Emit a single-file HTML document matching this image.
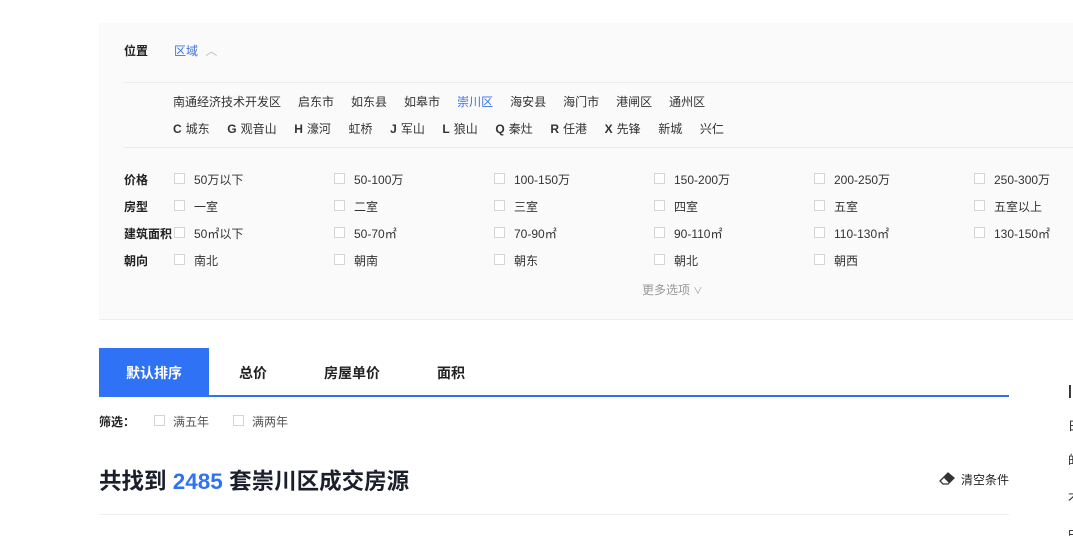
<!DOCTYPE html>
<html><head><meta charset="utf-8"><style>
*{margin:0;padding:0;box-sizing:border-box}
body{width:1073px;height:538px;background:#fff;font-family:"Liberation Sans","Noto Sans CJK SC",sans-serif;position:relative;overflow:hidden;color:#222}
.a{position:absolute;white-space:nowrap;font-size:12px;line-height:14px}
.panel{position:absolute;left:99px;top:23px;width:974px;height:297px;background:#fafafb;border-bottom:1px solid #eee}
.hl{position:absolute;left:124px;height:1px;width:949px;background:#ececee}
.lab{font-weight:bold;color:#222}
.cb{position:absolute;width:11px;height:11px;border:1px solid #d3d5d9;background:#fff}
.o{color:#333}
b.k{font-weight:bold;margin-right:4px}
.d span{margin-left:17px}
.l span.g{margin-left:17.6px}
.tab{position:absolute;top:348px;height:47px;line-height:50px;font-size:14px;font-weight:bold;text-align:center}
</style></head><body>
<div class="panel"></div>
<div class="a lab" style="left:124px;top:44px">位置</div>
<div class="a" style="left:174px;top:44px;color:#3d73e6">区域 <span style="color:#bbb;margin-left:4px">︿</span></div>
<div class="hl" style="top:82px"></div>
<div class="a o d" style="left:173px;top:95px">南通经济技术开发区<span>启东市</span><span>如东县</span><span>如皋市</span><span style="color:#3d73e6">崇川区</span><span>海安县</span><span>海门市</span><span>港闸区</span><span>通州区</span></div>
<div class="a o l" style="left:173px;top:122px"><b class="k">C</b>城东<span class="g"><b class="k">G</b>观音山</span><span class="g"><b class="k">H</b>濠河</span><span class="g">虹桥</span><span class="g"><b class="k">J</b>军山</span><span class="g"><b class="k">L</b>狼山</span><span class="g"><b class="k">Q</b>秦灶</span><span class="g"><b class="k">R</b>任港</span><span class="g"><b class="k">X</b>先锋</span><span class="g">新城</span><span class="g">兴仁</span></div>
<div class="hl" style="top:147px"></div>
<div id="grid"></div>
<div class="a" style="left:642px;top:283px;color:#999">更多选项 <span style="font-size:9px">∨</span></div>

<div class="tab" style="left:99px;width:110px;background:#3072f6;color:#fff">默认排序</div>
<div class="tab" style="left:225px;width:56px">总价</div>
<div class="tab" style="left:309px;width:86px">房屋单价</div>
<div class="tab" style="left:423px;width:56px">面积</div>
<div style="position:absolute;left:99px;top:395px;width:910px;height:2px;background:#3072f6"></div>
<div class="a lab" style="left:99px;top:415px">筛选：</div>
<div class="cb" style="left:154px;top:415px"></div><div class="a" style="left:173px;top:415px;color:#555">满五年</div>
<div class="cb" style="left:233px;top:415px"></div><div class="a" style="left:252px;top:415px;color:#555">满两年</div>
<div class="a" style="left:99px;top:467px;font-size:22.5px;line-height:29px;font-weight:bold;color:#1b1f2b">共找到 <span style="color:#3072f6">2485</span> 套崇川区成交房源</div>
<svg style="position:absolute;left:939px;top:472px" width="17" height="14" viewBox="0 0 17 14"><path d="M9 1 L15 6 L9 12 H4 L1 9 Z" fill="#fff" stroke="#333" stroke-width="1.3"/><path d="M9 1 L15 6 L10 11 L5 6 Z" fill="#333"/></svg>
<div class="a" style="left:961px;top:473px;color:#222">清空条件</div>
<div style="position:absolute;left:99px;top:514px;width:910px;height:1px;background:#eee"></div>
<div class="a" style="left:1068px;top:383px;font-weight:bold;font-size:14px">|</div>
<div class="a" style="left:1068px;top:419px">日</div>
<div class="a" style="left:1068px;top:453px">的</div>
<div class="a" style="left:1068px;top:490px">才</div>
<div class="a" style="left:1068px;top:527px">中</div>
<script>
var rows=[["价格",179,["50万以下","50-100万","100-150万","150-200万","200-250万","250-300万"]],
["房型",206,["一室","二室","三室","四室","五室","五室以上"]],
["建筑面积",233,["50㎡以下","50-70㎡","70-90㎡","90-110㎡","110-130㎡","130-150㎡"]],
["朝向",260,["南北","朝南","朝东","朝北","朝西"]]];
var h="";rows.forEach(function(r){h+='<div class="a lab" style="left:124px;top:'+(r[1]-6)+'px">'+r[0]+'</div>';
r[2].forEach(function(t,i){var x=174+160*i;h+='<div class="cb" style="left:'+x+'px;top:'+(r[1]-6)+'px"></div><div class="a o" style="left:'+(x+20)+'px;top:'+(r[1]-6)+'px">'+t+'</div>';});});
document.getElementById("grid").innerHTML=h;
</script>
</body></html>
